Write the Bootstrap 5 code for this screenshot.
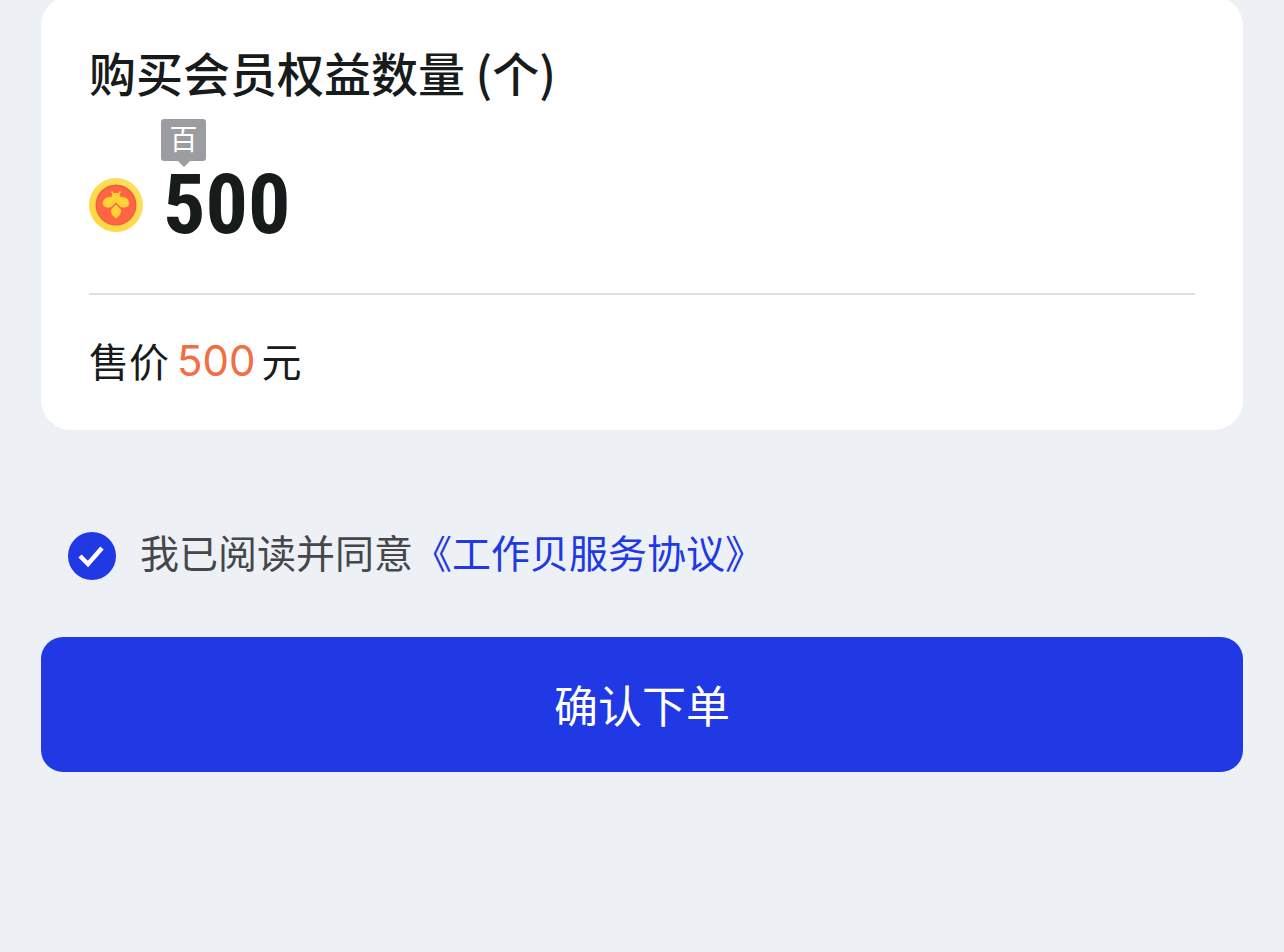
<!DOCTYPE html>
<html lang="zh-CN">
<head>
<meta charset="utf-8">
<meta name="viewport" content="width=device-width, initial-scale=1">
<title>确认下单</title>
<link href="https://cdn.jsdelivr.net/npm/bootstrap@5.3.0/dist/css/bootstrap.min.css" rel="stylesheet">
<style>
  body { background: #edf1f6; color: #171b1c; font-family: Inter, "Noto Sans CJK SC", sans-serif; }
  .page { padding: 0 41px 48px; }
  .order-card { margin-top: -4px; padding: 44px 48px 40px; border: 0; border-radius: 30px; }
  .order-title { margin: 0; font: 500 47px/64px "Noto Sans CJK SC", sans-serif; }
  .amount-row { margin-top: 64px; gap: 20px; height: 74px; }
  .coin { width: 54px; height: 54px; }
  .amount { font: 700 84px/74px "Roboto Condensed", Roboto, sans-serif; }
  .unit-tip { left: -2px; bottom: 81px; width: 45px; height: 42px; border-radius: 3px; background: #9c9da0; color: #fff; font: 400 28px/44px "Liberation Sans", "Noto Sans CJK SC", sans-serif; }
  .unit-tip::after { content: ""; position: absolute; top: 100%; left: 50%; margin-left: -6px; border: 6px solid transparent; border-top-color: #9c9da0; border-bottom: 0; }
  .order-rule { margin: 51px 0 35px; border-top: 2px solid #dfe0e2; opacity: 1; }
  .price { font: 400 40px/60px "Noto Sans CJK SC", sans-serif; gap: 6px; }
  .price-value { color: #f26d40; font: 400 42px/58px Inter, sans-serif; padding: 2px 0 0 2px; }
  .agree { margin: 94px 0 49px 27px; gap: 24px; color: #45474a; font: 400 39px/54px "Noto Sans CJK SC", sans-serif; }
  .agree-text { padding-bottom: 10px; }
  .agree .form-check-input { width: 48px; height: 48px; margin: 0; border: 0; }
  .agree .form-check-input:checked { background-color: #2039e5; background-size: 100%; background-image: url("data:image/svg+xml,%3Csvg xmlns='http://www.w3.org/2000/svg' viewBox='0 0 48 48'%3E%3Cpath d='M12 24l8 8L34 16' fill='none' stroke='%23fff' stroke-width='4.5'/%3E%3C/svg%3E"); }
  .agree a { color: #2039e5; }
  .btn-order { --bs-btn-bg: #2039e5; --bs-btn-color: #fff; --bs-btn-hover-bg: #1a30c9; --bs-btn-hover-color: #fff; padding: 35px 24px 36px; border: 0; border-radius: 22px; font: 400 44px/64px "Noto Sans CJK SC", sans-serif; }
</style>
</head>
<body>
<main class="page">
  <section class="card order-card">
    <h1 class="order-title">购买会员权益数量 (个)</h1>
    <div class="amount-row d-flex align-items-center">
      <svg class="coin flex-shrink-0" viewBox="0 0 54 54" aria-hidden="true">
        <defs>
          <linearGradient id="rim" x1="1" y1="0" x2="0" y2="1"><stop stop-color="#ffdf62"/><stop offset="1" stop-color="#ffd63c"/></linearGradient>
        </defs>
        <circle cx="27" cy="27" r="27" fill="url(#rim)"/>
        <circle cx="27" cy="27" r="20.5" fill="#ea623c"/>
        <circle cx="27" cy="27.5" r="19" fill="#ff6542"/>
        <g fill="#ffd238">
          <path d="M24 15h6l1.500 3-1 5h-7l-1-5z"/>
          <path d="M27 22c-2-3-6-3.500-9-2.500-4 1.500-5.500 6-3 8.500 2 2 6 2 8 .5l4-4 4 4c2 1.500 6 1.500 8-.5 2.500-2.500 1-7-3-8.500-3-1-7-.5-9 2.500z"/>
          <path d="M27 26.500l4.500 4.500c1.500 3-.5 6.500-4.500 9.500-4-3-6-6.500-4.500-9.500z"/>
        </g>
        <path d="M22.500 13.500l2.500 3M31.500 13.500l-2.500 3" stroke="#ffd238" stroke-width="1.500"/>
      </svg>
      <div class="amount position-relative">500<span class="unit-tip position-absolute text-center">百</span></div>
    </div>
    <hr class="order-rule">
    <div class="price d-flex align-items-center"><span>售价</span><span class="price-value">500</span><span>元</span></div>
  </section>
  <div class="agree d-flex align-items-center">
    <input class="form-check-input rounded-circle flex-shrink-0" type="checkbox" id="agree" checked>
    <div class="agree-text"><label for="agree">我已阅读并同意</label><a href="#" class="text-decoration-none">《工作贝服务协议》</a></div>
  </div>
  <button type="button" class="btn btn-order w-100">确认下单</button>
</main>
<script src="https://cdn.jsdelivr.net/npm/bootstrap@5.3.0/dist/js/bootstrap.bundle.min.js"></script>
</body>
</html>
